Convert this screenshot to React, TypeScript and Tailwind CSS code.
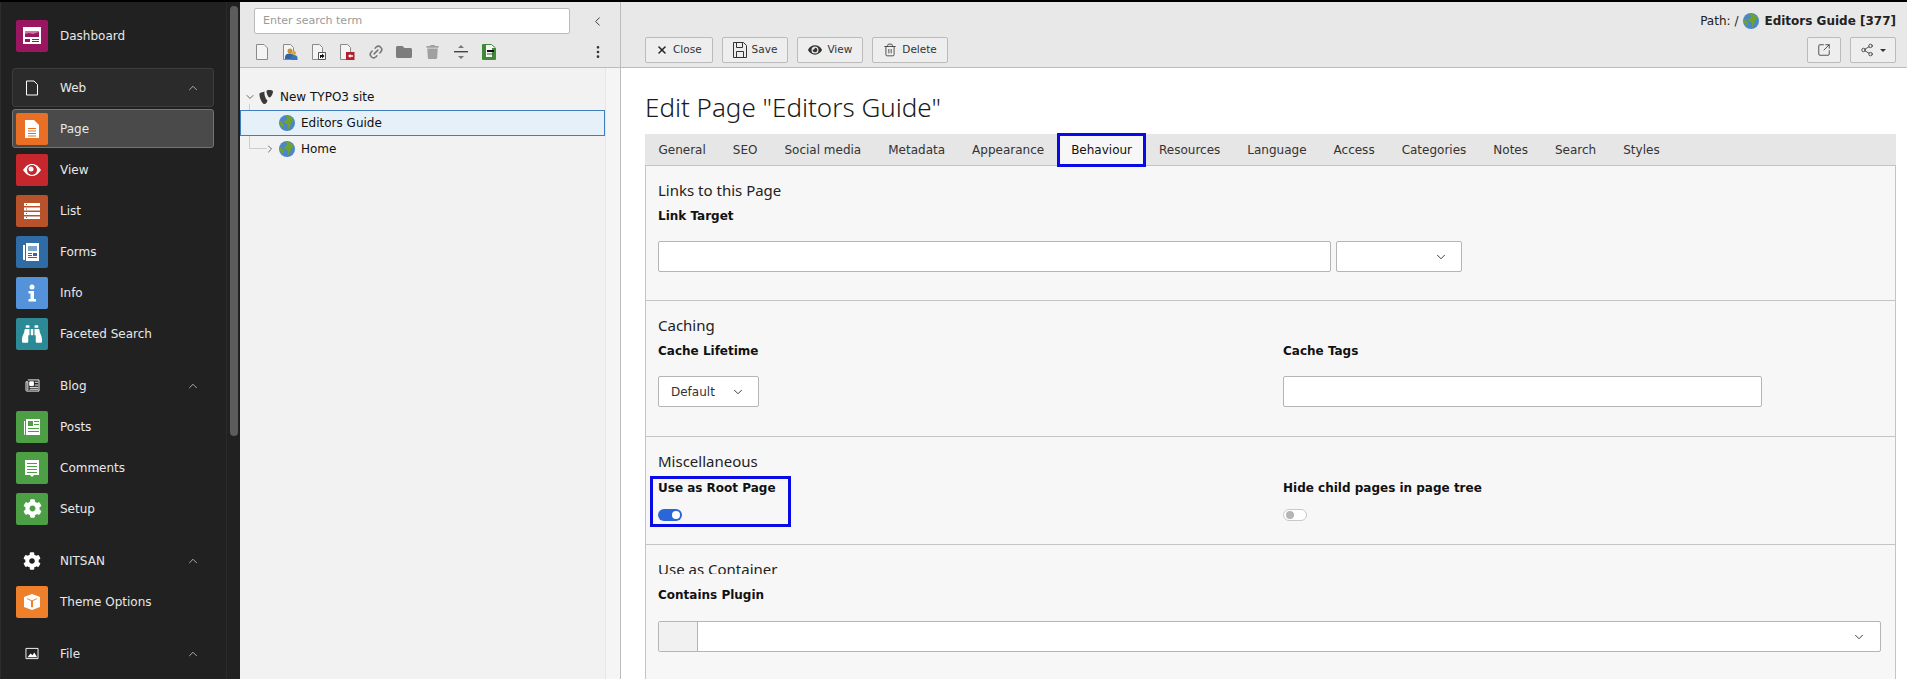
import type { ReactNode } from "react";
import {
  ChevronDown,
  ChevronLeft,
  ChevronRight,
  ChevronUp,
  EllipsisVertical,
  Eye,
  Link2,
  Share2,
  SquareArrowOutUpRight,
  Trash2,
  X,
} from "lucide-react";
import { FaBinoculars, FaCog, FaEye, FaFolder, FaTrash } from "react-icons/fa";

const sans = "font-['DejaVu_Sans',sans-serif]";

function Tile({ bg, children }: { bg: string; children: ReactNode }) {
  return (
    <span className={`flex h-8 w-8 shrink-0 items-center justify-center rounded-[2px] text-white ${bg}`}>
      <svg viewBox="0 0 32 32" className="h-8 w-8" fill="white">
        {children}
      </svg>
    </span>
  );
}

function NavRow({ label, icon, active }: { label: string; icon: ReactNode; active?: boolean }) {
  return (
    <div
      className={`flex h-[39px] items-center rounded-[3px] border pl-[3px] ${
        active ? "border-[#747474] bg-[#4a4a4a]" : "border-transparent"
      }`}
    >
      {icon}
      <span className="ml-[12px] text-[12px] text-[#e8e8e8]">{label}</span>
    </div>
  );
}

function NavGroup({
  label,
  icon,
  boxed,
  children,
}: {
  label: string;
  icon: ReactNode;
  boxed?: boolean;
  children: ReactNode;
}) {
  return (
    <div className="mt-[13px] flex flex-col gap-[2px]">
      <div
        className={`flex h-[39px] items-center rounded-[3px] border pl-[3px] pr-[13px] ${
          boxed ? "border-[#3d3d3d] bg-[#2b2b2b]" : "border-transparent"
        }`}
      >
        <span className="flex h-8 w-8 shrink-0 items-center justify-center">{icon}</span>
        <span className="ml-[12px] flex-1 text-[12px] text-[#e8e8e8]">{label}</span>
        <ChevronUp className="h-[14px] w-[14px] text-[#bdbdbd]" strokeWidth={1.5} />
      </div>
      {children}
    </div>
  );
}

function Sidebar() {
  return (
    <aside className="relative w-[240px] shrink-0 overflow-hidden border-l border-[#2c2c2c] bg-[#212121] pl-[11px] pr-[26px] pt-[14px]">
      <NavRow
        label="Dashboard"
        icon={
          <Tile bg="bg-[#9b1660]">
            <rect x="7" y="7" width="18" height="17" />
            <path d="M9 11h14v6H9z" fill="#c97aa3" />
            <path d="M9 14l4-1 4 1 6-2v5H9z" fill="#9b1660" />
            <path d="M9 19h5v3H9zM16 19h7v1H16zM16 21h7v1H16z" fill="#9b1660" />
          </Tile>
        }
      />
      <NavGroup
        boxed
        label="Web"
        icon={
          <svg viewBox="0 0 14 16" className="h-4 w-[14px]" fill="none" stroke="white" strokeWidth="1">
            <path d="M1.5 1h7.5l3.5 3.500V15h-11z" />
          </svg>
        }
      >
        <NavRow
          active
          label="Page"
          icon={
            <Tile bg="bg-[#e96f25]">
              <path d="M9 7h9l5 5v13H9z" />
              <path d="M12 15h8v1h-8zM12 17.500h8v1h-8zM12 20h8v1h-8zM12 22.500h8v1h-8z" fill="#e96f25" />
            </Tile>
          }
        />
        <NavRow
          label="View"
          icon={
            <Tile bg="bg-[#c5272d]">
              <path d="M7 16c3-4.500 6-6 9-6s6 1.500 9 6c-3 4.500-6 6-9 6s-6-1.500-9-6z" />
              <circle cx="16" cy="16" r="5" fill="#c5272d" />
              <circle cx="15" cy="15" r="2.500" />
            </Tile>
          }
        />
        <NavRow
          label="List"
          icon={
            <Tile bg="bg-[#b7522a]">
              <path d="M8 8h16v3H8zM8 12.500h16v3H8zM8 17h16v3H8zM8 21.500h16v2.500H8z" />
              <path d="M10 9h1v1h-1zM10 13.500h1v1h-1zM10 18h1v1h-1zM10 22h1v1h-1z" fill="#b7522a" />
            </Tile>
          }
        />
        <NavRow
          label="Forms"
          icon={
            <Tile bg="bg-[#2f6ca5]">
              <path d="M7 9h2v15H8a1 1 0 0 1-1-1zM10 7h13v18H10z" />
              <path d="M12 10h9v5h-9z" fill="#7da6cb" />
              <path d="M12 17h4v1h-4zM12 19h4v1h-4zM12 21h9v1h-9zM17 17h4v3h-4z" fill="#2f6ca5" />
            </Tile>
          }
        />
        <NavRow
          label="Info"
          icon={
            <Tile bg="bg-[#5492da]">
              <circle cx="16" cy="10" r="2.500" />
              <path d="M12.500 14h5.500v8h2v2.500h-7.500V22h2v-5.500h-2z" />
            </Tile>
          }
        />
        <NavRow
          label="Faceted Search"
          icon={
            <Tile bg="bg-[#2b8a96]">
              <foreignObject x="6" y="6" width="20" height="20">
                <FaBinoculars className="h-5 w-5 rotate-0 text-white" />
              </foreignObject>
            </Tile>
          }
        />
      </NavGroup>
      <NavGroup
        label="Blog"
        icon={
          <svg viewBox="0 0 16 14" className="h-[13px] w-[15px]" fill="none" stroke="white" strokeWidth="1">
            <path d="M3 1h12v12H2a1 1 0 0 1-1-1V3h2v9" />
            <path d="M5 3h4v4H5z" fill="white" />
            <path d="M10.500 3.500H14M10.500 6.500H14M5 9h9M5 11h9" />
          </svg>
        }
      >
        <NavRow
          label="Posts"
          icon={
            <Tile bg="bg-[#4c9f45]">
              <path d="M8 10h1v14a1 1 0 0 1-1-1zM10 8h14v16H10z" />
              <path d="M12 10h5v5h-5z" fill="#4c9f45" />
              <path d="M18 10h5v1h-5zM18 13h5v1h-5zM12 17h11v1H12zM12 20h11v1H12z" fill="#4c9f45" />
            </Tile>
          }
        />
        <NavRow
          label="Comments"
          icon={
            <Tile bg="bg-[#4c9f45]">
              <path d="M9 8h14v15h-5l-2 2-2-2H9z" />
              <path d="M11 11h10v1H11zM11 14h10v1H11zM11 17h10v1H11zM11 20h10v1H11z" fill="#4c9f45" />
            </Tile>
          }
        />
        <NavRow
          label="Setup"
          icon={
            <span className="flex h-8 w-8 shrink-0 items-center justify-center rounded-[2px] bg-[#4c9f45]">
              <FaCog className="h-[19px] w-[19px] text-white" />
            </span>
          }
        />
      </NavGroup>
      <NavGroup label="NITSAN" icon={<FaCog className="h-[18px] w-[18px] text-white" />}>
        <NavRow
          label="Theme Options"
          icon={
            <Tile bg="bg-[#ee7f2b]">
              <path d="M16 8l8 3v10l-8 3-8-3V11z" />
              <path d="M11 12.500l5 2.500 5-2.500M15.500 15h1v6h-1z" fill="none" stroke="#ee7f2b" strokeWidth="1" />
            </Tile>
          }
        />
      </NavGroup>
      <NavGroup
        label="File"
        icon={
          <svg viewBox="0 0 14 14" className="h-[13px] w-[14px]" fill="none" stroke="white" strokeWidth="1">
            <path d="M.500 1.500h13v11H.500z" />
            <path d="M2 11l3.500-4 2 2 2-3 3 5z" fill="white" stroke="none" />
          </svg>
        }
      >
        <NavRow label="" icon={<span className="h-8 w-8 rounded-[2px] bg-[#47762f]" />} />
      </NavGroup>
      <div className="absolute left-[225px] top-0 h-full w-px bg-[#2b2b2b]" />
      <div className="absolute left-[229px] top-[4px] h-[430px] w-2 rounded-full bg-[#5c5c5c]" />
    </aside>
  );
}

function Globe() {
  return (
    <svg viewBox="0 0 16 16" className="h-4 w-4 shrink-0">
      <circle cx="8" cy="8" r="8" fill="#4a86c8" />
      <path d="M7 1c2-.500 5 .500 6.500 2.500l.500 3-2 1-.500 3-2 3.500-1-.500.500-3-1.500-2-2-.500-.500-2 2-1 1-1.500z" fill="#6fa32e" />
      <path d="M1 6l2 1 1 2 1 .500v2L3 13C1.500 11 .500 8.500 1 6z" fill="#6fa32e" />
    </svg>
  );
}

function TreeTool({ children }: { children: ReactNode }) {
  return <span className="flex h-4 w-4 shrink-0 items-center justify-center">{children}</span>;
}

function TreeToolbar() {
  return (
    <div className="flex items-center pl-[14px] pr-[14px] pt-[10px]">
      <div className="flex flex-1 items-center gap-[12.4px]">
        <TreeTool>
          <svg viewBox="0 0 14 16" className="h-4 w-[14px]" fill="#f4f4f4" stroke="#8a8a8a">
            <path d="M1.500.500h7.500l3.500 3.500v11.500h-11z" />
          </svg>
        </TreeTool>
        <TreeTool>
          <svg viewBox="0 0 16 16" className="h-4 w-4" fill="#f4f4f4" stroke="#8a8a8a">
            <path d="M1.500.500h7l3 3V15.500h-10z" />
            <circle cx="8" cy="7" r="2.500" fill="#c8912e" stroke="none" />
            <path d="M3 15v-2c0-2.500 2-3.500 5-3.500s4 1 4 3.500v2z" fill="#2f62a8" stroke="none" />
            <circle cx="12" cy="9" r="2" fill="#d8a53c" stroke="none" />
            <path d="M9 16v-2c0-2 1-3 3-3s3.500 1 3.500 3v2z" fill="#3c72b8" stroke="none" />
          </svg>
        </TreeTool>
        <TreeTool>
          <svg viewBox="0 0 16 16" className="h-4 w-4" fill="#f4f4f4" stroke="#8a8a8a">
            <path d="M1.500.500h7l3 3V15.500h-10z" />
            <path d="M7.500 8.500h7v7h-7z" fill="white" stroke="#555" />
            <path d="M9 14v-3h2V9.500l2.500 2.500L11 14.500V13h-1v1z" fill="#111" stroke="none" />
          </svg>
        </TreeTool>
        <TreeTool>
          <svg viewBox="0 0 16 16" className="h-4 w-4" fill="#f4f4f4" stroke="#8a8a8a">
            <path d="M1.500.500h7l3 3V15.500h-10z" />
            <path d="M7 8h8.500v8H7z" fill="#b3202a" stroke="none" />
            <path d="M9 12l2.500-2v1.300H14v1.400h-2.500V14z" fill="white" stroke="none" />
          </svg>
        </TreeTool>
        <TreeTool>
          <Link2 className="h-4 w-4 -rotate-45 text-[#777]" strokeWidth={2.2} />
        </TreeTool>
        <TreeTool>
          <FaFolder className="h-4 w-4 text-[#7d7d7d]" />
        </TreeTool>
        <TreeTool>
          <FaTrash className="h-[14px] w-[13px] text-[#a0a0a0]" />
        </TreeTool>
        <TreeTool>
          <svg viewBox="0 0 16 14" className="h-[14px] w-4" fill="#777">
            <path d="M8 0l3 3H5zM8 14l-3-3h6z" />
            <path d="M1 6h14v1.400H1z" fill="#444" />
          </svg>
        </TreeTool>
        <TreeTool>
          <svg viewBox="0 0 14 16" className="h-4 w-[14px]">
            <path d="M.500.500h9l4 3.500v11.500H.500z" fill="#f6f6f6" stroke="#3e8a36" />
            <path d="M1 1h3v14H1zM10 4h3v11h-3zM4 13h6v2H4z" fill="#3e8a36" />
            <path d="M5 6h7v2H5z" fill="#111" />
            <path d="M5 9.500h7v1H5z" fill="#555" />
          </svg>
        </TreeTool>
      </div>
      <EllipsisVertical className="h-4 w-4 text-[#333]" strokeWidth={2} />
    </div>
  );
}

function PageTree() {
  return (
    <section className="flex w-[380px] shrink-0 flex-col bg-[#f2f2f2]">
      <div className="h-[66px] shrink-0 border-b border-[#bcbcbc] bg-[#e8e8e8]">
        <div className="flex items-center pl-[14px] pr-[15px] pt-[6px]">
          <div className="flex h-[26px] w-[316px] items-center rounded-[2px] border border-[#bbb] bg-white px-[8px] text-[11px] text-[#9a9a9a]">
            Enter search term
          </div>
          <span className="flex flex-1 justify-end">
            <ChevronLeft className="h-[15px] w-[15px] text-[#333]" strokeWidth={1.5} />
          </span>
        </div>
        <TreeToolbar />
      </div>
      <div className="relative flex flex-1 flex-col pt-[16px] text-[12px] text-[#111]">
        <div className="absolute inset-y-0 right-0 w-[15px] border-l border-[#e6e6e6] bg-[#f5f5f5]" />
        <div className="absolute left-[9px] top-[36px] h-[44px] w-px bg-[#cdcdcd]" />
        <div className="absolute left-[9px] top-[80px] h-px w-[18px] bg-[#cdcdcd]" />
        <div className="flex h-[26px] items-center pl-[4px]">
          <ChevronDown className="h-3 w-3 text-[#444]" strokeWidth={1.6} />
          <svg viewBox="0 0 16 16" className="ml-[2px] h-4 w-4" fill="#3a3a3a">
            <path d="M11 1c1.500 0 4 .300 4 1.500 0 2-2 6-3.500 6C10 8.500 8.500 4 8.500 2.500 8.500 1.300 9.500 1 11 1z" />
            <path d="M6.500 2.500C5 3 2.800 3.500 1.500 4.500 1 7 3.500 15 6.500 15c1.500 0 2.500-1.800 3-3.500-2-1.500-3.500-6-3-9z" />
          </svg>
          <span className="ml-[6px]">New TYPO3 site</span>
        </div>
        <div className="relative mr-[15px] flex h-[26px] items-center border border-[#3f7fbf] bg-[#e6f0f9] pl-[38px]">
          <Globe />
          <span className="ml-[6px]">Editors Guide</span>
        </div>
        <div className="flex h-[26px] items-center pl-[24px]">
          <ChevronRight className="h-3 w-3 text-[#444]" strokeWidth={1.6} />
          <span className="ml-[3px]" />
          <Globe />
          <span className="ml-[6px]">Home</span>
        </div>
      </div>
    </section>
  );
}

function DocButton({ icon, label }: { icon: ReactNode; label: string }) {
  return (
    <button
      type="button"
      className="flex h-[26px] items-center gap-[5px] rounded-[2px] border border-[#bbb] bg-[#eeeeee] px-[10px] text-[10.5px] text-[#333]"
    >
      {icon}
      {label}
    </button>
  );
}

function DocHeader() {
  return (
    <header className="h-[66px] shrink-0 border-b border-[#bcbcbc] bg-[#e8e8e8] pl-[24px] pr-[11px]">
      <div className="flex h-[35px] items-center justify-end gap-[5px] pt-[2px] text-[12px] text-[#222]">
        <span>Path: /</span>
        <Globe />
        <span className="font-bold">Editors Guide [377]</span>
      </div>
      <div className="flex items-center gap-[9px]">
        <DocButton icon={<X className="h-3 w-3 text-[#222]" strokeWidth={3} />} label="Close" />
        <DocButton
          icon={
            <svg viewBox="0 0 14 16" className="h-4 w-[14px]" fill="none" stroke="#333">
              <path d="M.500.500h10l3 3v12H.500z" />
              <path d="M3.500.500v5h6v-5M3.500 15.500v-6h7v6" />
            </svg>
          }
          label="Save"
        />
        <DocButton icon={<FaEye className="h-[14px] w-[14px] text-[#333]" />} label="View" />
        <DocButton icon={<Trash2 className="h-4 w-[14px] text-[#333]" strokeWidth={1.4} />} label="Delete" />
        <div className="flex-1" />
        <button type="button" className="flex h-[26px] w-[34px] items-center justify-center rounded-[2px] border border-[#bbb] bg-[#eeeeee]">
          <SquareArrowOutUpRight className="h-[14px] w-[14px] text-[#333]" strokeWidth={1.4} />
        </button>
        <button type="button" className="flex h-[26px] w-[46px] items-center justify-center gap-[6px] rounded-[2px] border border-[#bbb] bg-[#eeeeee]">
          <Share2 className="h-[14px] w-[14px] text-[#333]" strokeWidth={1.4} />
          <span className="h-0 w-0 border-x-[3px] border-t-[3px] border-x-transparent border-t-[#333]" />
        </button>
      </div>
    </header>
  );
}

const tabs = ["General", "SEO", "Social media", "Metadata", "Appearance", "Behaviour", "Resources", "Language", "Access", "Categories", "Notes", "Search", "Styles"];

function Tabs() {
  return (
    <div className="flex h-[32px] border-b border-[#c4c4c4] bg-[#e6e6e6] text-[12px] text-[#333]">
      {tabs.map((tab) =>
        tab === "Behaviour" ? (
          <div key={tab} className="relative flex items-center bg-[#f7f7f7] px-[13.5px] text-[#111]">
            {tab}
            <span className="absolute -inset-x-[0.5px] -bottom-[2px] -top-[1px] border-[3px] border-[#0a0ae6]" />
          </div>
        ) : (
          <div key={tab} className="flex items-center px-[13.5px]">
            {tab}
          </div>
        ),
      )}
    </div>
  );
}

function FieldLabel({ children }: { children: ReactNode }) {
  return <div className="text-[12px] font-bold leading-[16px] text-[#111]">{children}</div>;
}

function SectionTitle({ children }: { children: ReactNode }) {
  return <h4 className="font-['Noto_Sans',sans-serif] text-[15px] font-normal leading-[20px] text-[#222]">{children}</h4>;
}

function SelectBox({ className, label }: { className: string; label?: string }) {
  return (
    <div className={`flex h-[31px] items-center justify-between rounded-[2px] border border-[#b5b5b5] bg-white pl-[12px] pr-[13px] text-[12px] text-[#333] ${className}`}>
      <span>{label}</span>
      <ChevronDown className="h-[14px] w-[14px] text-[#333]" strokeWidth={1.6} />
    </div>
  );
}

function TextBox({ className }: { className: string }) {
  return <div className={`h-[31px] rounded-[2px] border border-[#b5b5b5] bg-white ${className}`} />;
}

function Toggle({ on }: { on?: boolean }) {
  return on ? (
    <span className="flex h-3 w-6 items-center justify-end rounded-full bg-[#2b66d9] pr-[2px]">
      <span className="h-2 w-2 rounded-full bg-white" />
    </span>
  ) : (
    <span className="flex h-3 w-6 items-center rounded-full border border-[#c9c9c9] bg-white pl-[2px]">
      <span className="h-2 w-2 rounded-full bg-[#b5b5b5]" />
    </span>
  );
}

function EditForm() {
  return (
    <div className="flex-1 overflow-hidden border-x border-[#c4c4c4] bg-[#f7f7f7]">
      <section className="h-[135px] border-b border-[#c4c4c4] px-[12px] pt-[14px]">
        <SectionTitle>Links to this Page</SectionTitle>
        <div className="mt-[8px]">
          <FieldLabel>Link Target</FieldLabel>
        </div>
        <div className="mt-[17px] flex gap-[5px]">
          <TextBox className="w-[673px]" />
          <SelectBox className="w-[126px]" />
        </div>
      </section>
      <section className="h-[136px] border-b border-[#c4c4c4] px-[12px] pt-[14px]">
        <SectionTitle>Caching</SectionTitle>
        <div className="mt-[8px] grid grid-cols-[625px_1fr]">
          <div>
            <FieldLabel>Cache Lifetime</FieldLabel>
            <SelectBox className="mt-[17px] w-[101px]" label="Default" />
          </div>
          <div>
            <FieldLabel>Cache Tags</FieldLabel>
            <TextBox className="mt-[17px] w-[479px]" />
          </div>
        </div>
      </section>
      <section className="h-[108px] border-b border-[#c4c4c4] px-[12px] pt-[14px]">
        <SectionTitle>Miscellaneous</SectionTitle>
        <div className="mt-[9px] grid grid-cols-[625px_1fr]">
          <div className="relative">
            <FieldLabel>Use as Root Page</FieldLabel>
            <div className="mt-[13px] flex">
              <Toggle on />
            </div>
            <span className="absolute -left-[8px] -top-[4px] h-[51px] w-[141px] border-[3px] border-[#0a0ae6]" />
          </div>
          <div>
            <FieldLabel>Hide child pages in page tree</FieldLabel>
            <div className="mt-[13px] flex">
              <Toggle />
            </div>
          </div>
        </div>
      </section>
      <section className="px-[12px] pt-[14px]">
        <div className="h-[15px] overflow-hidden">
          <SectionTitle>Use as Container</SectionTitle>
        </div>
        <div className="mt-[13px]">
          <FieldLabel>Contains Plugin</FieldLabel>
        </div>
        <div className="mt-[18px] flex h-[31px] w-[1223px] rounded-[2px] border border-[#b5b5b5] bg-white">
          <span className="w-[39px] border-r border-[#b5b5b5] bg-[#f1f1f1]" />
          <span className="flex flex-1 items-center justify-end pr-[14px]">
            <ChevronDown className="h-[14px] w-[14px] text-[#333]" strokeWidth={1.6} />
          </span>
        </div>
      </section>
    </div>
  );
}

export default function App() {
  return (
    <div className={`flex h-[679px] w-[1907px] overflow-hidden border-t-2 border-black bg-white ${sans}`}>
      <Sidebar />
      <PageTree />
      <main className="flex min-w-0 flex-1 flex-col border-l border-[#bcbcbc] bg-white">
        <DocHeader />
        <div className="flex min-h-0 flex-1 flex-col pl-[24px] pr-[11px]">
          <h1 className="mt-[22px] h-[44px] font-['Noto_Sans',sans-serif] text-[26px] font-light leading-[34px] text-[#1a1a1a]">
            Edit Page "Editors Guide"
          </h1>
          <Tabs />
          <EditForm />
        </div>
      </main>
    </div>
  );
}
